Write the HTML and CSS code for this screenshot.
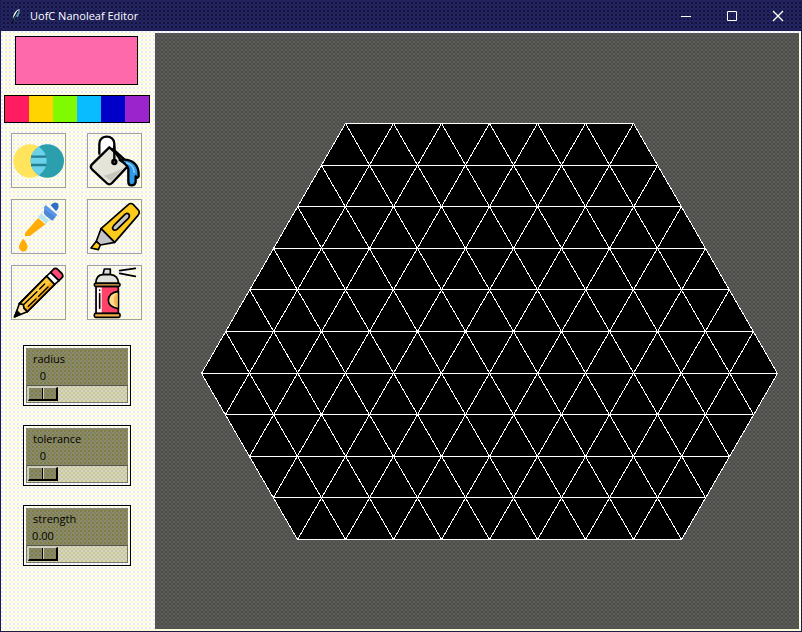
FILE: index.html
```html
<!DOCTYPE html>
<html lang="en">
<head>
<meta charset="utf-8">
<title>UofC Nanoleaf Editor</title>
<link rel="stylesheet" href="styles.css">
</head>
<body>
<header class="titlebar">
  <svg class="feather" viewBox="0 0 16 16" aria-hidden="true">
    <path d="M5 13C4 8 6 3 12 1C12 6 10 10 6 12Z" fill="#5c93b8"/>
    <path d="M5 12C5 7 7 3 11 1C9 4 7 8 5 12Z" fill="#fff"/>
    <path d="M4 16L6 10L10 3M7 11L9 9" fill="none" stroke="#061018" stroke-width="1.2"/>
  </svg>
  <h1 class="title">UofC Nanoleaf Editor</h1>
  <div class="window-buttons">
    <button class="window-button" type="button" aria-label="Minimize"><svg viewBox="0 0 12 12"><path d="M1 6.5H11"/></svg></button>
    <button class="window-button" type="button" aria-label="Maximize"><svg viewBox="0 0 12 12"><path d="M1.500 1.500H10.500V10.500H1.500Z"/></svg></button>
    <button class="window-button" type="button" aria-label="Close"><svg viewBox="0 0 12 12"><path d="M1 1L11 11M11 1L1 11" stroke-width="1.4"/></svg></button>
  </div>
</header>
<main class="client">
  <aside class="sidebar">
    <div class="current-color"></div>
    <div class="palette">
      <button class="color red" type="button" aria-label="Red"></button>
      <button class="color yellow" type="button" aria-label="Yellow"></button>
      <button class="color green" type="button" aria-label="Green"></button>
      <button class="color sky" type="button" aria-label="Sky blue"></button>
      <button class="color blue" type="button" aria-label="Blue"></button>
      <button class="color purple" type="button" aria-label="Purple"></button>
    </div>
    <div class="tools">
      <button class="tool" type="button" aria-label="Blend">
        <svg viewBox="3 3 159 159">
          <defs><clipPath id="left-disc"><circle cx="57" cy="84" r="50"/></clipPath></defs>
          <circle cx="57" cy="84" r="50" fill="#ffe45c"/>
          <circle cx="109" cy="84" r="50" fill="#2b9fae"/>
          <circle cx="109" cy="84" r="50" fill="#6cd2ea" clip-path="url(#left-disc)"/>
          <path d="M60 71H106M60 96H106" stroke="#237f94" stroke-width="7"/>
        </svg>
      </button>
      <button class="tool" type="button" aria-label="Fill">
        <svg viewBox="3 3 159 159" stroke="#000" stroke-width="7" stroke-linecap="round" stroke-linejoin="round">
          <path d="M37 62V32C37 4 82 4 82 32V60" fill="#fff"/>
          <path d="M67 43L118 88Q126 95 119 103L75 150Q67 158 59 150L15 109Q8 101 15 94Z" fill="#e4e4d8"/>
          <path d="M50 128L72 144L109 106L70 122Z" fill="#c6c6bc" stroke="none"/>
          <path d="M78 48L100 80L118 88L108 75Z" fill="#555"/>
          <path d="M98 81C134 75 157 94 155 130Q150 139 146 130V147Q144 157 134 157Q124 157 124 147V107Q119 93 98 81Z" fill="#2e9bea"/>
          <path d="M119 90Q139 94 142 118" fill="none" stroke="#8bd2ff" stroke-width="4"/>
          <path d="M82 42V82" fill="none"/>
          <circle cx="82" cy="87" r="6" fill="#55755c"/>
        </svg>
      </button>
      <button class="tool" type="button" aria-label="Pick color">
        <svg viewBox="3 3 159 159">
          <path d="M81 57L103 76L57 111Q46 110 41 112Q40 102 47 96Z" fill="#ffad08"/>
          <path d="M81 57L90 42L114 64L103 76Q95 59 81 57Z" fill="#b9e5ee"/>
          <path d="M98 26L104 18L139 47L133 54L118 54L108 49Z" fill="#5c97ee"/>
          <path d="M100 30L134 54L124 65Q103 52 98 42Z" fill="#4f87d7"/>
          <path d="M119 19Q128 6 140 13Q148 25 135 37Z" fill="#2f6fc6"/>
          <path d="M37 119Q50 134 50 144Q48 157 37 158Q26 157 24 144Q24 134 37 119Z" fill="#ffad08"/>
        </svg>
      </button>
      <button class="tool" type="button" aria-label="Highlighter">
        <svg viewBox="3 3 159 159" stroke="#000" stroke-width="5" stroke-linejoin="round">
          <path d="M42 89L124 17Q131 10 139 17L154 33Q160 40 153 49L83 130Z" fill="#fcca1b"/>
          <path d="M80 80L113 47Q119 40 125 45Q130 51 124 58L90 91Q83 96 78 91Q75 86 80 80Z" fill="#c5c5c8"/>
          <path d="M42 89L83 130L40 138L28 127Z" fill="#c5c5c8"/>
          <path d="M28 127L40 138L34 152L12 147Z" fill="#fcca1b"/>
        </svg>
      </button>
      <button class="tool" type="button" aria-label="Pencil">
        <svg viewBox="3 3 159 159" stroke="#000" stroke-width="5" stroke-linejoin="round" stroke-linecap="round">
          <path d="M25 116L107 33L131 58L49 140Z" fill="#ffc83b"/>
          <path d="M40 132L123 49L131 58L49 140Z" fill="#f4a51c" stroke="none"/>
          <path d="M25 116L107 33L131 58L49 140Z" fill="none"/>
          <path d="M36 121L78 80M86 72L101 57M52 124L75 102M83 94L111 66" fill="none" stroke-width="4"/>
          <path d="M107 33L119 22L144 47L131 58Z" fill="#fff"/>
          <path d="M119 22L128 12Q134 8 140 13L153 26Q158 33 153 38L144 47Z" fill="#ff4978"/>
          <path d="M25 116L37 119L39 130L49 140L11 155Z" fill="#ffe6b8"/>
          <path d="M18 138L28 148L10 156Z" fill="#000"/>
        </svg>
      </button>
      <button class="tool" type="button" aria-label="Spray can">
        <svg viewBox="3 3 159 159" stroke="#000" stroke-width="5" stroke-linejoin="round" stroke-linecap="round">
          <path d="M98 17L145 10M98 25L145 34" fill="none"/>
          <path d="M48 29L52 12H70V29Z" fill="#ddd"/>
          <path d="M26 55Q28 29 48 29H71Q93 31 95 55Z" fill="#e2e2dc"/>
          <path d="M27 64H94V146H27Z" fill="#ff4268"/>
          <path d="M30 67H44V143H30Z" fill="#fff" stroke="none"/>
          <path d="M38 86V130M38 75V76" fill="none"/>
          <path d="M94 79C54 83 54 128 94 131Z" fill="#ffdc92"/>
          <path d="M92 84C76 92 76 118 92 128Z" fill="#f3b74f" stroke="none"/>
          <rect x="22" y="55" width="77" height="9" rx="4" fill="#efb34f"/>
          <rect x="22" y="145" width="77" height="12" rx="4" fill="#f3b04b"/>
        </svg>
      </button>
    </div>
    <div class="scales">
      <div class="scale"><div class="scale-face">
        <label for="radius">radius</label><output for="radius">0</output>
        <input id="radius" type="range" min="0" max="10" value="0">
      </div></div>
      <div class="scale"><div class="scale-face">
        <label for="tolerance">tolerance</label><output for="tolerance">0</output>
        <input id="tolerance" type="range" min="0" max="100" value="0">
      </div></div>
      <div class="scale"><div class="scale-face">
        <label for="strength">strength</label><output for="strength">0.00</output>
        <input id="strength" type="range" min="0" max="1" step="0.01" value="0">
      </div></div>
    </div>
  </aside>
  <section class="canvas" aria-label="Panel layout">
    <svg class="panels" viewBox="0 0 578 418">
      <g transform="translate(.5 .5)" stroke="#fff" fill="none" shape-rendering="crispEdges">
        <path fill="#000" d="M144 0H432L576 250L480 416H96L0 250Z"/>
        <path d="M120 42H456M96 83H480M72 125H504M48 166H528M24 208H552M0 250H576M24 291H552M48 333H528M72 374H504"/>
        <path id="diagonals" d="M144 0L384 416M192 0L432 416M240 0L480 416M288 0L504 374M336 0L528 333M384 0L552 291M120 42L336 416M96 83L288 416M72 125L240 416M48 166L192 416M24 208L144 416"/>
        <use href="#diagonals" transform="translate(576 0) scale(-1 1)"/>
      </g>
    </svg>
  </section>
</main>
</body>
</html>
```

FILE: styles.css
```css
:root {
  --panel: conic-gradient(#fff 25%, #ffffb4 0 50%, #fff 0 75%, #e6e6ff 0) 0 0 / 4px 4px;
  --face: conic-gradient(#8c8c5c 25%, #7c7c4c 0 50%, #8c8c60 0 75%, #808070 0) 0 0 / 4px 4px;
  --trough: conic-gradient(#d8d8b4 25%, #c8c898 0 50%, #d8d8b4 0 75%, #c4c4b8 0) 0 0 / 4px 4px;
}

* {
  box-sizing: border-box;
}

body {
  display: flex;
  flex-direction: column;
  min-height: 100vh;
  margin: 0;
  border: solid #1c1c4c;
  border-width: 0 1px 1px;
  font: 12px/17px "Open Sans", "Noto Sans", sans-serif;
  color: #000;
}

button {
  margin: 0;
  padding: 0;
  border: 0;
  background: none;
}

svg {
  display: block;
}

.titlebar {
  display: flex;
  align-items: center;
  height: 31px;
  padding-left: 7px;
  background: conic-gradient(#242460 25%, #12123e 0 50%, #242460 0 75%, #202058 0) 0 0 / 4px 4px;
  color: #fff;
}

.feather {
  width: 16px;
  height: 16px;
}

.title {
  flex: 1;
  margin: 0 0 0 6px;
  font-size: 11px;
  font-weight: 400;
}

.window-buttons {
  display: flex;
}

.window-button {
  display: grid;
  place-items: center;
  width: 46px;
  height: 31px;
}

.window-button svg {
  width: 12px;
  height: 12px;
  fill: none;
  stroke: #fff;
}

.client {
  display: flex;
  flex: 1;
  background: var(--panel);
}

.sidebar {
  display: flex;
  flex-direction: column;
  gap: 10px;
  width: 154px;
  padding: 5px 5px 0 3px;
}

.current-color {
  width: 123px;
  height: 49px;
  margin-left: 11px;
  border: 1px solid #000;
  background: conic-gradient(#ff69b0 25%, #ff62a4 0 50%, #ff6eae 0 75%, #fa68a8 0) 0 0 / 2px 2px;
}

.palette {
  display: grid;
  grid-template-columns: repeat(6, 1fr);
  height: 28px;
  border: 1px solid #000;
}

.red { background: #ff1c60; }
.yellow { background: #ffd400; }
.green { background: #80fa00; }
.sky { background: #08bcff; }
.blue { background: #0000c8; }
.purple { background: #9c24cc; }

.tools {
  display: grid;
  grid-template-columns: 55px 55px;
  gap: 11px 21px;
  margin-left: 7px;
}

.tool {
  height: 55px;
  border: 1px solid #a0a0a0;
}

.tool svg {
  width: 53px;
  height: 53px;
}

.scales {
  display: grid;
  justify-content: center;
  gap: 19px;
  padding-top: 15px;
}

.scale {
  width: 108px;
  padding: 2px;
  border: 1px solid #000;
}

.scale-face {
  display: flex;
  flex-direction: column;
  padding-top: 2px;
  background: var(--face);
  font-size: 11px;
}

.scale-face label {
  padding-left: 7px;
}

.scale-face output {
  width: 34px;
  text-align: center;
}

.scale-face input {
  appearance: none;
  width: 100%;
  height: 18px;
  margin: 1px 0 0;
  padding: 0 1px;
  border: 1px solid #77776c;
  border-top-color: #55554c;
  background: var(--trough);
}

.scale-face input::-webkit-slider-thumb {
  appearance: none;
  width: 30px;
  height: 14px;
  border: solid #000;
  border-width: 1px 2px 2px 1px;
  border-top-color: #d0d0c0;
  border-left-color: #d0d0c0;
  background: linear-gradient(90deg, transparent 13px, #000 0 14px, #d0d0c0 0 15px, transparent 0), var(--face);
}

.canvas {
  flex: 1;
  margin: 2px 2px 2px 0;
  padding: 90px 0 0 46px;
  background: conic-gradient(#5c5c58 25%, #4c4c54 0 50%, #5a5a48 0 75%, #505052 0) 0 0 / 4px 4px;
}

.panels {
  width: 578px;
  max-width: 100%;
}
```
